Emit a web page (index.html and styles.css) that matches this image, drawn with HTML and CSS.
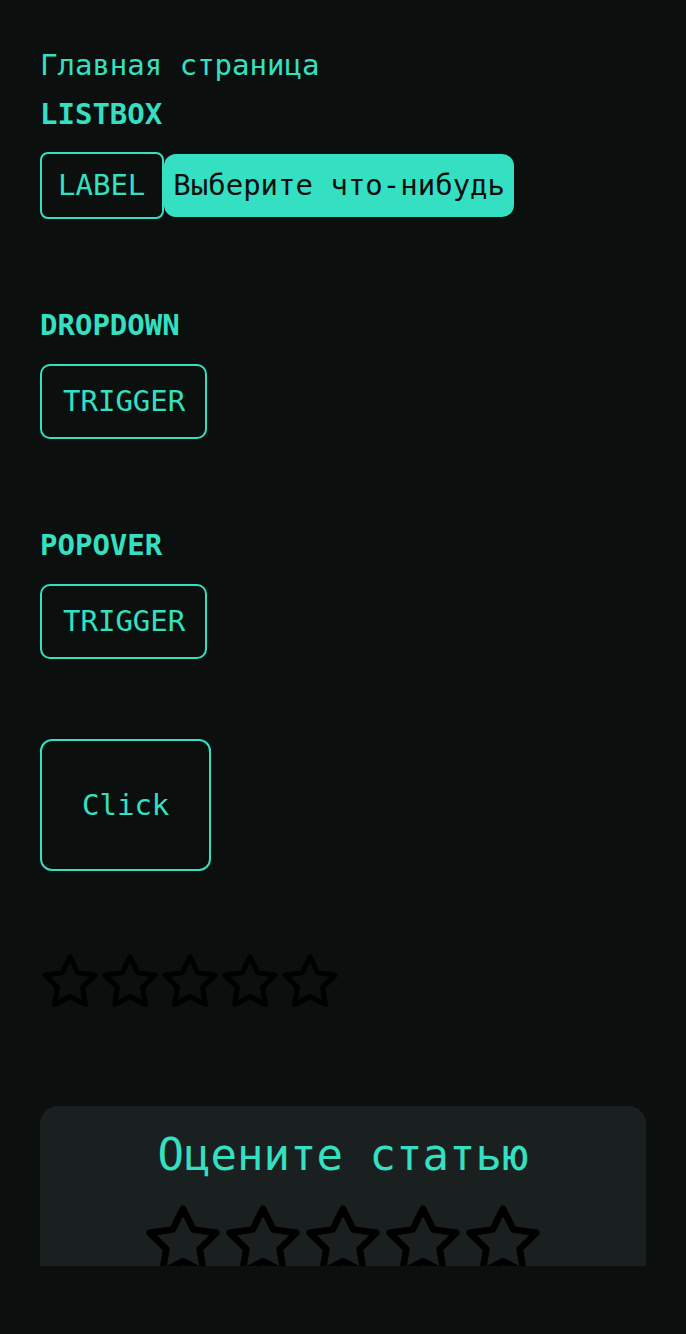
FILE: index.html
```html
<!DOCTYPE html>
<html lang="ru">
<head>
<meta charset="utf-8">
<title>Главная страница</title>
<link rel="stylesheet" href="styles.css">
</head>
<body>
<div class="page">
  <div class="crumb">Главная страница</div>

  <h2 class="sec-title first">LISTBOX</h2>
  <div class="listbox">
    <span class="lb-label">LABEL</span>
    <button class="lb-button">Выберите что-нибудь</button>
  </div>

  <h2 class="sec-title">DROPDOWN</h2>
  <button class="trigger">TRIGGER</button>

  <h2 class="sec-title">POPOVER</h2>
  <button class="trigger">TRIGGER</button>

  <button class="click">Click</button>

  <div class="stars small">
    <svg viewBox="0 0 24 24"><polygon points="12 2 15.09 8.26 22 9.27 17 14.14 18.18 21.02 12 17.77 5.82 21.02 7 14.14 2 9.27 8.91 8.26 12 2"/></svg>
    <svg viewBox="0 0 24 24"><polygon points="12 2 15.09 8.26 22 9.27 17 14.14 18.18 21.02 12 17.77 5.82 21.02 7 14.14 2 9.27 8.91 8.26 12 2"/></svg>
    <svg viewBox="0 0 24 24"><polygon points="12 2 15.09 8.26 22 9.27 17 14.14 18.18 21.02 12 17.77 5.82 21.02 7 14.14 2 9.27 8.91 8.26 12 2"/></svg>
    <svg viewBox="0 0 24 24"><polygon points="12 2 15.09 8.26 22 9.27 17 14.14 18.18 21.02 12 17.77 5.82 21.02 7 14.14 2 9.27 8.91 8.26 12 2"/></svg>
    <svg viewBox="0 0 24 24"><polygon points="12 2 15.09 8.26 22 9.27 17 14.14 18.18 21.02 12 17.77 5.82 21.02 7 14.14 2 9.27 8.91 8.26 12 2"/></svg>
  </div>

  <div class="card">
    <div class="card-title">Оцените статью</div>
    <div class="stars big">
      <svg viewBox="0 0 24 24"><polygon points="12 2 15.09 8.26 22 9.27 17 14.14 18.18 21.02 12 17.77 5.82 21.02 7 14.14 2 9.27 8.91 8.26 12 2"/></svg>
      <svg viewBox="0 0 24 24"><polygon points="12 2 15.09 8.26 22 9.27 17 14.14 18.18 21.02 12 17.77 5.82 21.02 7 14.14 2 9.27 8.91 8.26 12 2"/></svg>
      <svg viewBox="0 0 24 24"><polygon points="12 2 15.09 8.26 22 9.27 17 14.14 18.18 21.02 12 17.77 5.82 21.02 7 14.14 2 9.27 8.91 8.26 12 2"/></svg>
      <svg viewBox="0 0 24 24"><polygon points="12 2 15.09 8.26 22 9.27 17 14.14 18.18 21.02 12 17.77 5.82 21.02 7 14.14 2 9.27 8.91 8.26 12 2"/></svg>
      <svg viewBox="0 0 24 24"><polygon points="12 2 15.09 8.26 22 9.27 17 14.14 18.18 21.02 12 17.77 5.82 21.02 7 14.14 2 9.27 8.91 8.26 12 2"/></svg>
    </div>
  </div>
</div>
</body>
</html>
```

FILE: styles.css
```css
html, body {
  margin: 0;
  padding: 0;
  background: #0b0f0e;
}

body {
  font-family: "DejaVu Sans Mono", "Liberation Mono", monospace;
  font-size: 29px;
  line-height: 34px;
  color: #35e0c2;
}

.page {
  box-sizing: border-box;
  height: 1266px;
  overflow: hidden;
  padding: 48px 40px 0;
  display: flex;
  flex-direction: column;
  align-items: flex-start;
}

.crumb {
  font-weight: normal;
}

.sec-title {
  margin: 89px 0 0;
  font-size: 29px;
  line-height: 34px;
  font-weight: bold;
}

.sec-title.first {
  margin-top: 15px;
}

.listbox {
  margin-top: 21px;
  display: flex;
  align-items: center;
}

.lb-label {
  border: 2px solid #35e0c2;
  border-radius: 8px;
  padding: 14px 17px 14px 16px;
  line-height: 35px;
}

button {
  font: inherit;
  margin: 0;
  cursor: pointer;
}

.lb-button {
  background: #35e0c2;
  color: #0b0f0e;
  border: none;
  border-radius: 12px;
  padding: 14px 9px;
  line-height: 35px;
}

.trigger {
  margin-top: 22px;
  background: transparent;
  color: #35e0c2;
  border: 2px solid #35e0c2;
  border-radius: 10px;
  padding: 18px 20px 19px 21px;
  line-height: 34px;
}

.click {
  margin-top: 80px;
  background: transparent;
  color: #35e0c2;
  border: 2px solid #35e0c2;
  border-radius: 12px;
  padding: 47px 40px 47px 40px;
  line-height: 34px;
}

.stars {
  display: flex;
}

.stars svg {
  fill: none;
  stroke: #000;
  stroke-width: 2;
  stroke-linejoin: round;
  stroke-linecap: round;
  display: block;
}

.stars.small {
  margin-top: 81px;
}

.stars.small svg {
  width: 60px;
  height: 60px;
}

.card {
  margin-top: 94px;
  align-self: stretch;
  background: #1a1f1f;
  border-radius: 18px;
  padding: 23px 0 40px;
  display: flex;
  flex-direction: column;
  align-items: center;
}

.card-title {
  font-size: 44px;
  line-height: 51px;
}

.stars.big {
  margin-top: 22px;
}

.stars.big svg {
  width: 80px;
  height: 80px;
}
```
